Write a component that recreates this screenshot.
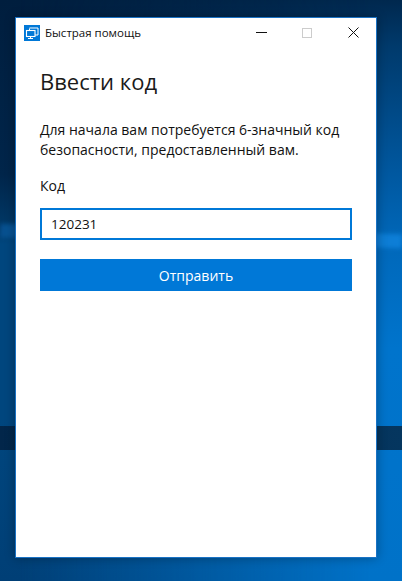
<script>
</script>

<div class="desk">
  <div class="shade"></div>
  <div class="streak"></div>
  <div class="band"></div>
  <div class="win">
    <div class="titlebar">
      <div class="app">
        <svg class="logo" width="16" height="16" viewBox="0 0 16 16">
          <rect width="16" height="16" fill="#0078d7"/>
          <path d="M5.5 3h8.500v7h-3" fill="none" stroke="#fff" stroke-width="1"/>
          <path d="M5.500 3.500v2" fill="none" stroke="#fff" stroke-width="1"/>
          <rect x="2.500" y="5.500" width="8.500" height="6" fill="#0078d7" stroke="#fff" stroke-width="1.100"/>
          <path d="M6.500 12v1.500M4 13.500h5" fill="none" stroke="#fff" stroke-width="1"/>
        </svg>
        <span>Быстрая помощь</span>
      </div>
      <div class="controls">
        <span class="ctl"><svg width="11" height="11" viewBox="0 0 11 11"><path d="M0 5.500h11" stroke="#111" fill="none"/></svg></span>
        <span class="ctl"><svg width="10" height="10" viewBox="0 0 10 10"><rect x=".5" y=".5" width="9" height="9" fill="none" stroke="#ccc"/></svg></span>
        <span class="ctl"><svg width="11" height="11" viewBox="0 0 11 11"><path d="M.5.5l10 10M10.500.5l-10 10" stroke="#111" fill="none"/></svg></span>
      </div>
    </div>
    <main>
      <h1>Ввести код</h1>
      <p>Для начала вам потребуется 6-значный код безопасности, предоставленный вам.</p>
      <label for="code">Код</label>
      <input id="code" value="120231" />
      <button>Отправить</button>
    </main>
  </div>
</div>

<style>
  :global(body) { margin: 0; }
  .desk {
    position: relative;
    width: 402px;
    height: 581px;
    overflow: hidden;
    box-sizing: border-box;
    padding: 17px 25px 0 15px;
    font-family: "Open Sans", "Noto Sans", sans-serif;
    background: linear-gradient(180deg, #001e3e 0%, #00254a 30%, #003866 39%, #00467e 42%, #00467e 72%, #003f76 100%);
  }
  .shade {
    position: absolute;
    inset: 0;
    background: linear-gradient(180deg, #00284e 0%, #003a6c 8%, #0058a0 30%, #0068ba 42%, #0074cc 60%, #0072c8 100%);
    -webkit-mask-image: linear-gradient(90deg, transparent 5%, #000 92%);
    mask-image: linear-gradient(90deg, transparent 5%, #000 92%);
  }
  .streak {
    position: absolute;
    left: 0;
    right: 0;
    top: 229px;
    height: 14px;
    background: linear-gradient(90deg, #07508f, #0d7fd8);
    transform: rotate(1.500deg);
    filter: blur(2px);
  }
  .band {
    position: absolute;
    left: 0;
    right: 0;
    top: 426px;
    height: 24px;
    background: linear-gradient(90deg, #02264a, #05365f);
  }
  .win {
    position: relative;
    width: 362px;
    height: 541px;
    box-sizing: border-box;
    background: #fff;
    border: 1px solid #1a72c4;
    box-shadow: 0 0 10px rgba(0,0,0,.3);
  }
  .titlebar {
    height: 29px;
    display: flex;
    justify-content: space-between;
    align-items: center;
  }
  .app {
    display: flex;
    align-items: center;
    gap: 5px;
    padding-left: 8px;
    font-size: 11.500px;
    color: #111;
  }
  .logo { display: block; }
  .controls { display: flex; }
  .ctl {
    width: 46px;
    height: 29px;
    display: flex;
    align-items: center;
    justify-content: center;
  }
  main { padding: 19px 24px 0 24px; }
  h1 {
    margin: 0;
    font-size: 22px;
    font-weight: 400;
    line-height: 30px;
    color: #1a1a1a;
  }
  p {
    margin: 24px 0 0;
    font-size: 14px;
    line-height: 20px;
    color: #111;
  }
  label {
    display: block;
    margin-top: 16px;
    font-size: 14px;
    line-height: 20px;
    color: #111;
  }
  input {
    display: block;
    box-sizing: border-box;
    width: 312px;
    height: 32px;
    margin-top: 12px;
    padding: 0 9px;
    border: 2px solid #0078d7;
    border-radius: 0;
    outline: none;
    font: inherit;
    font-size: 13.500px;
    color: #111;
    background: #fff;
  }
  button {
    display: block;
    width: 312px;
    height: 32px;
    margin-top: 19px;
    border: 0;
    border-radius: 0;
    background: #0078d7;
    color: #fff;
    font: inherit;
    font-size: 14px;
  }
</style>
